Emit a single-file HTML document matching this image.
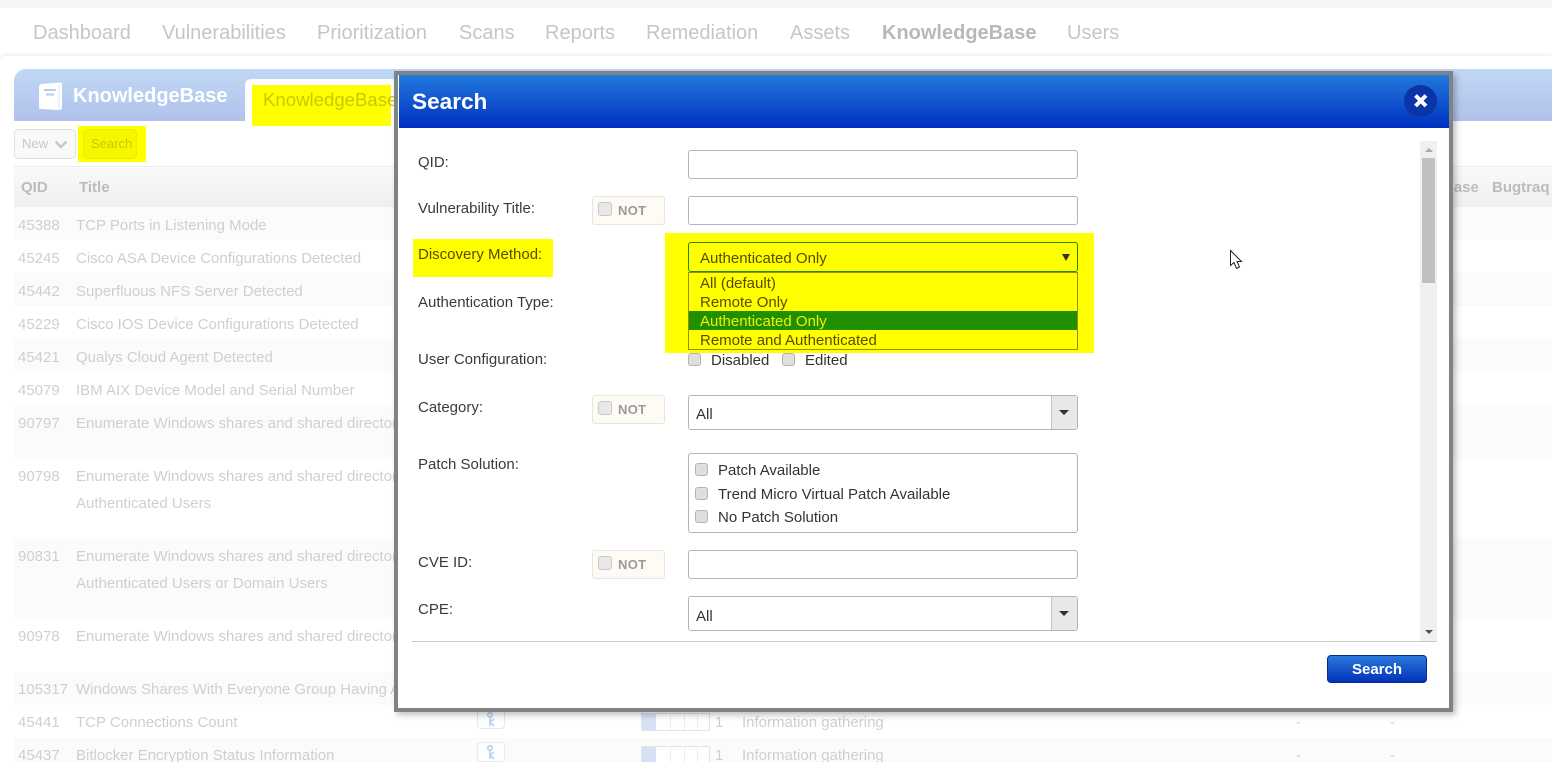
<!DOCTYPE html>
<html><head><meta charset="utf-8"><style>
html,body{margin:0;padding:0;width:1552px;height:762px;overflow:hidden;background:#fff;font-family:"Liberation Sans",sans-serif}
#w{position:relative;width:1552px;height:762px;overflow:hidden;background:#fff}
.a{position:absolute;white-space:nowrap}
.n{top:21px;font-size:20px;line-height:24px;color:#c6c6c6}
.r{position:absolute;left:14px;width:1538px}
.t{position:absolute;margin-top:1px;font-size:15px;line-height:18px;color:#cfcfcf;white-space:nowrap}
.h{position:absolute;top:179px;font-size:15px;line-height:18px;font-weight:bold;color:#bcbcbc;white-space:nowrap}
.l{position:absolute;margin-top:2px;left:418px;font-size:15px;line-height:18px;color:#3a3a3a;white-space:nowrap}
.i{position:absolute;left:688px;width:388px;height:27px;border:1px solid #b4b4b4;border-radius:3px;background:#fff}
.not{position:absolute;left:592px;width:71px;height:27px;border:1px solid #e8e6dc;border-radius:3px;background:#fdfbf3}
.not b{position:absolute;left:25px;top:6px;font-size:13px;line-height:16px;color:#9a9a9a;letter-spacing:.3px}
.not i{position:absolute;left:5px;top:5px;width:12px;height:12px;border:1px solid #c8c8c8;border-radius:3px;background:#e8e8e8}
.c{position:absolute;width:11px;height:11px;border:1px solid #b4b4b4;border-radius:3px;background:#dedede}
.m{position:absolute;margin-top:2px;font-size:15px;line-height:18px;color:#333;white-space:nowrap}
.o{position:absolute;margin-top:2px;left:700px;font-size:15px;line-height:18px;color:#5a4a00;white-space:nowrap}
.s{position:absolute;left:688px;width:388px;height:33px;border:1px solid #b4b4b4;border-radius:3px;background:#fff}
.s span{position:absolute;left:7px;top:10px;font-size:15px;line-height:18px;color:#333}
.s u{position:absolute;right:0;top:0;width:25px;height:33px;background:#e8e8e8;border-left:1px solid #c4c4c4;border-radius:0 3px 3px 0}
.s u:after{content:"";position:absolute;left:7px;top:14px;border:5px solid transparent;border-top:5px solid #333;border-bottom:0}
.key{position:absolute;left:477px;width:26px;height:18px;border:1px solid #e8e8e8;border-radius:4px;background:#fff}
.key svg{position:absolute;left:8px;top:2px}
.bar{position:absolute;left:641px;width:67px;height:16px;border:1px solid #e4e4e4;background:linear-gradient(90deg,#d6e2f4 0,#d6e2f4 14px,#fff 14px,#fff 28px,#eee 28px,#eee 29px,#fff 29px,#fff 42px,#eee 42px,#eee 43px,#fff 43px,#fff 55px,#eee 55px,#eee 56px,#fff 56px)}
</style></head><body><div id="w">
<div class="a" style="left:0;top:0;width:1552px;height:8px;background:#f6f6f7"></div>
<div class="a" style="left:0;top:56px;width:1552px;height:706px;background:#fff;border-radius:8px 0 0 0;box-shadow:0 -2px 5px #f0f0f0"></div>

<div class="a n" style="left:33px">Dashboard</div>
<div class="a n" style="left:162px">Vulnerabilities</div>
<div class="a n" style="left:317px">Prioritization</div>
<div class="a n" style="left:459px">Scans</div>
<div class="a n" style="left:545px">Reports</div>
<div class="a n" style="left:646px">Remediation</div>
<div class="a n" style="left:790px">Assets</div>
<div class="a n" style="left:882px;font-weight:bold;color:#b8b8b8">KnowledgeBase</div>
<div class="a n" style="left:1067px">Users</div>

<div class="a" style="left:14px;top:69px;width:1538px;height:52px;border-radius:12px 0 0 0;background:linear-gradient(#c0d8f4,#b0c2ec)"></div>
<svg class="a" style="left:37px;top:81px" width="28" height="30" viewBox="0 0 28 30"><path d="M4 3 Q2 4 2 6 V27 Q2 28 4 28 L21 29 L25 28 V2 L23 1.5 Z" fill="#fff"/><path d="M22 4 V27" stroke="#dfe7f7" stroke-width="1"/><path d="M7 9H19M9 13.5H17" stroke="#b8cbee" stroke-width="2"/></svg>
<div class="a" style="left:73px;top:84px;font-size:20px;line-height:24px;font-weight:bold;color:#fff">KnowledgeBase</div>
<div class="a" style="left:245px;top:79px;width:160px;height:42px;background:#fff;border-radius:6px 0 0 0"></div>
<div class="a" style="left:252px;top:85px;width:139px;height:41px;background:#ff0"></div>
<div class="a" style="left:263px;top:88px;font-size:18.6px;line-height:24px;color:#c8c800">KnowledgeBase</div>

<div class="a" style="left:14px;top:129px;width:60px;height:28px;border:1px solid #e2e2e2;border-radius:4px;background:#f9f9f9"></div>
<div class="a" style="left:22px;top:136px;font-size:13px;line-height:16px;color:#c8c8c8">New</div>
<svg class="a" style="left:54px;top:140px" width="14" height="9"><path d="M1.5 1.5 L7 7 L12.5 1.5" fill="none" stroke="#c8c8c8" stroke-width="2.5"/></svg>
<div class="a" style="left:78px;top:126px;width:68px;height:36px;background:#ff0"></div>
<div class="a" style="left:83px;top:129px;width:52px;height:28px;border:1px solid #eaea00;border-radius:5px;background:#f6f600"></div>
<div class="a" style="left:91px;top:136px;font-size:13px;line-height:16px;color:#c8c800">Search</div>

<div class="r" style="top:166px;height:41px;background:linear-gradient(#fafafa,#efefef);border-top:1px solid #eee;box-sizing:border-box"></div>
<div class="h" style="left:21px">QID</div>
<div class="h" style="left:79px">Title</div>
<div class="h" style="left:1443px">Base</div>
<div class="h" style="left:1492px">Bugtraq</div>

<div class="r" style="top:207px;height:33px;background:#fbfbfb"></div>
<div class="r" style="top:273px;height:33px;background:#fbfbfb"></div>
<div class="r" style="top:339px;height:33px;background:#fbfbfb"></div>
<div class="r" style="top:405px;height:54px;background:#fbfbfb"></div>
<div class="r" style="top:539px;height:80px;background:#fbfbfb"></div>
<div class="r" style="top:672px;height:33px;background:#fbfbfb"></div>
<div class="r" style="top:738px;height:24px;background:#fbfbfb"></div>

<div class="t" style="left:18px;top:216px">45388</div><div class="t" style="left:76px;top:216px">TCP Ports in Listening Mode</div>
<div class="t" style="left:18px;top:249px">45245</div><div class="t" style="left:76px;top:249px">Cisco ASA Device Configurations Detected</div>
<div class="t" style="left:18px;top:282px">45442</div><div class="t" style="left:76px;top:282px">Superfluous NFS Server Detected</div>
<div class="t" style="left:18px;top:315px">45229</div><div class="t" style="left:76px;top:315px">Cisco IOS Device Configurations Detected</div>
<div class="t" style="left:18px;top:348px">45421</div><div class="t" style="left:76px;top:348px">Qualys Cloud Agent Detected</div>
<div class="t" style="left:18px;top:381px">45079</div><div class="t" style="left:76px;top:381px">IBM AIX Device Model and Serial Number</div>
<div class="t" style="left:18px;top:414px">90797</div><div class="t" style="left:76px;top:414px">Enumerate Windows shares and shared directories</div>
<div class="t" style="left:18px;top:467px">90798</div><div class="t" style="left:76px;top:467px">Enumerate Windows shares and shared directories</div><div class="t" style="left:76px;top:494px">Authenticated Users</div>
<div class="t" style="left:18px;top:547px">90831</div><div class="t" style="left:76px;top:547px">Enumerate Windows shares and shared directories</div><div class="t" style="left:76px;top:574px">Authenticated Users or Domain Users</div>
<div class="t" style="left:18px;top:627px">90978</div><div class="t" style="left:76px;top:627px">Enumerate Windows shares and shared directories</div>
<div class="t" style="left:18px;top:680px">105317</div><div class="t" style="left:76px;top:680px">Windows Shares With Everyone Group Having Access</div>
<div class="t" style="left:18px;top:713px">45441</div><div class="t" style="left:76px;top:713px">TCP Connections Count</div>
<div class="t" style="left:18px;top:746px">45437</div><div class="t" style="left:76px;top:746px">Bitlocker Encryption Status Information</div>

<div class="key" style="top:709px"><svg width="10" height="15" viewBox="0 0 10 15"><circle cx="4" cy="3" r="2.2" fill="none" stroke="#bcd4f0" stroke-width="1.8"/><path d="M4 5V14M4 10L8 7M4 10L8 14" fill="none" stroke="#bcd4f0" stroke-width="1.8"/></svg></div>
<div class="key" style="top:742px"><svg width="10" height="15" viewBox="0 0 10 15"><circle cx="4" cy="3" r="2.2" fill="none" stroke="#bcd4f0" stroke-width="1.8"/><path d="M4 5V14M4 10L8 7M4 10L8 14" fill="none" stroke="#bcd4f0" stroke-width="1.8"/></svg></div>
<div class="bar" style="top:713px"></div>
<div class="bar" style="top:746px"></div>
<div class="t" style="left:715px;top:713px">1</div><div class="t" style="left:742px;top:713px">Information gathering</div>
<div class="t" style="left:715px;top:746px">1</div><div class="t" style="left:742px;top:746px">Information gathering</div>
<div class="t" style="left:1296px;top:713px">-</div><div class="t" style="left:1390px;top:713px">-</div>
<div class="t" style="left:1296px;top:746px">-</div><div class="t" style="left:1390px;top:746px">-</div>

<!-- modal -->
<div class="a" style="left:394px;top:71px;width:1051px;height:633px;border:4px solid #7f8286;background:#fff;box-shadow:3px 3px 6px rgba(0,0,0,.25)"></div>
<div class="a" style="left:399px;top:75px;width:1050px;height:53px;background:linear-gradient(#2279dc,#0030c0)"></div>
<div class="a" style="left:412px;top:88px;font-size:22.6px;line-height:28px;font-weight:bold;color:#fff">Search</div>
<div class="a" style="left:1404px;top:85px;width:33px;height:32px;border-radius:50%;background:#0a34a8"></div>
<svg class="a" style="left:1413px;top:93px" width="16" height="16"><path d="M2.5 2.5 L13 13 M13 2.5 L2.5 13" stroke="#fff" stroke-width="4"/></svg>

<div class="l" style="top:152px">QID:</div>
<div class="i" style="top:150px"></div>
<div class="l" style="top:198px">Vulnerability Title:</div>
<div class="not" style="top:196px"><i></i><b>NOT</b></div>
<div class="i" style="top:196px"></div>

<div class="a" style="left:413px;top:239px;width:140px;height:38px;background:#ff0"></div>
<div class="l" style="top:244px;color:#5a4a00">Discovery Method:</div>
<div class="l" style="top:292px">Authentication Type:</div>
<div class="l" style="top:349px">User Configuration:</div>

<div class="a" style="left:665px;top:233px;width:429px;height:120px;background:#ff0"></div>
<div class="a" style="left:688px;top:242px;width:388px;height:28px;border:1px solid #208c00;border-radius:3px"></div>
<div class="o" style="top:248px">Authenticated Only</div>
<div class="a" style="left:1062px;top:254px;border:4px solid transparent;border-top:7px solid #333;border-bottom:0"></div>
<div class="a" style="left:688px;top:272px;width:388px;height:76px;border:1px solid #909000"></div>
<div class="o" style="top:273px">All (default)</div>
<div class="o" style="top:292px">Remote Only</div>
<div class="a" style="left:689px;top:311px;width:388px;height:19px;background:#209000"></div>
<div class="o" style="top:311px;color:#f0f000">Authenticated Only</div>
<div class="o" style="top:330px">Remote and Authenticated</div>

<div class="c" style="left:688px;top:353px"></div>
<div class="m" style="left:711px;top:350px">Disabled</div>
<div class="c" style="left:782px;top:353px"></div>
<div class="m" style="left:805px;top:350px">Edited</div>

<div class="l" style="top:397px">Category:</div>
<div class="not" style="top:395px"><i></i><b>NOT</b></div>
<div class="s" style="top:395px"><span>All</span><u></u></div>

<div class="l" style="top:454px">Patch Solution:</div>
<div class="a" style="left:688px;top:453px;width:388px;height:78px;border:1px solid #b4b4b4;border-radius:3px"></div>
<div class="c" style="left:695px;top:463px"></div><div class="m" style="left:718px;top:460px">Patch Available</div>
<div class="c" style="left:695px;top:487px"></div><div class="m" style="left:718px;top:484px">Trend Micro Virtual Patch Available</div>
<div class="c" style="left:695px;top:510px"></div><div class="m" style="left:718px;top:507px">No Patch Solution</div>

<div class="l" style="top:552px">CVE ID:</div>
<div class="not" style="top:550px"><i></i><b>NOT</b></div>
<div class="i" style="top:550px"></div>
<div class="l" style="top:599px">CPE:</div>
<div class="s" style="top:596px"><span style="top:11px">All</span><u></u></div>

<!-- scrollbar -->
<div class="a" style="left:1420px;top:141px;width:17px;height:500px;background:#f0f0f0"></div>
<div class="a" style="left:1422px;top:158px;width:13px;height:125px;background:#bfbfbf"></div>
<div class="a" style="left:1425px;top:148px;border:4px solid transparent;border-bottom:4px solid #a8a8a8;border-top:0"></div>
<div class="a" style="left:1425px;top:630px;border:4px solid transparent;border-top:4px solid #505050;border-bottom:0"></div>
<div class="a" style="left:412px;top:641px;width:1025px;height:1px;background:#c8c8c8"></div>

<div class="a" style="left:1327px;top:655px;width:98px;height:26px;border:1px solid #0a2a8c;border-radius:4px;background:linear-gradient(#2a78dc,#0232b8);color:#fff;font-size:15px;line-height:28px;font-weight:bold;text-align:center">Search</div>

<svg class="a" style="left:1229px;top:249px" width="15" height="22"><path d="M1.5 1.5 V16.5 L5 13.5 L7.5 19.5 L10.5 18 L8 12.5 H12.5 Z" fill="#fff" stroke="#222" stroke-width="1"/></svg>
</div></body></html>
